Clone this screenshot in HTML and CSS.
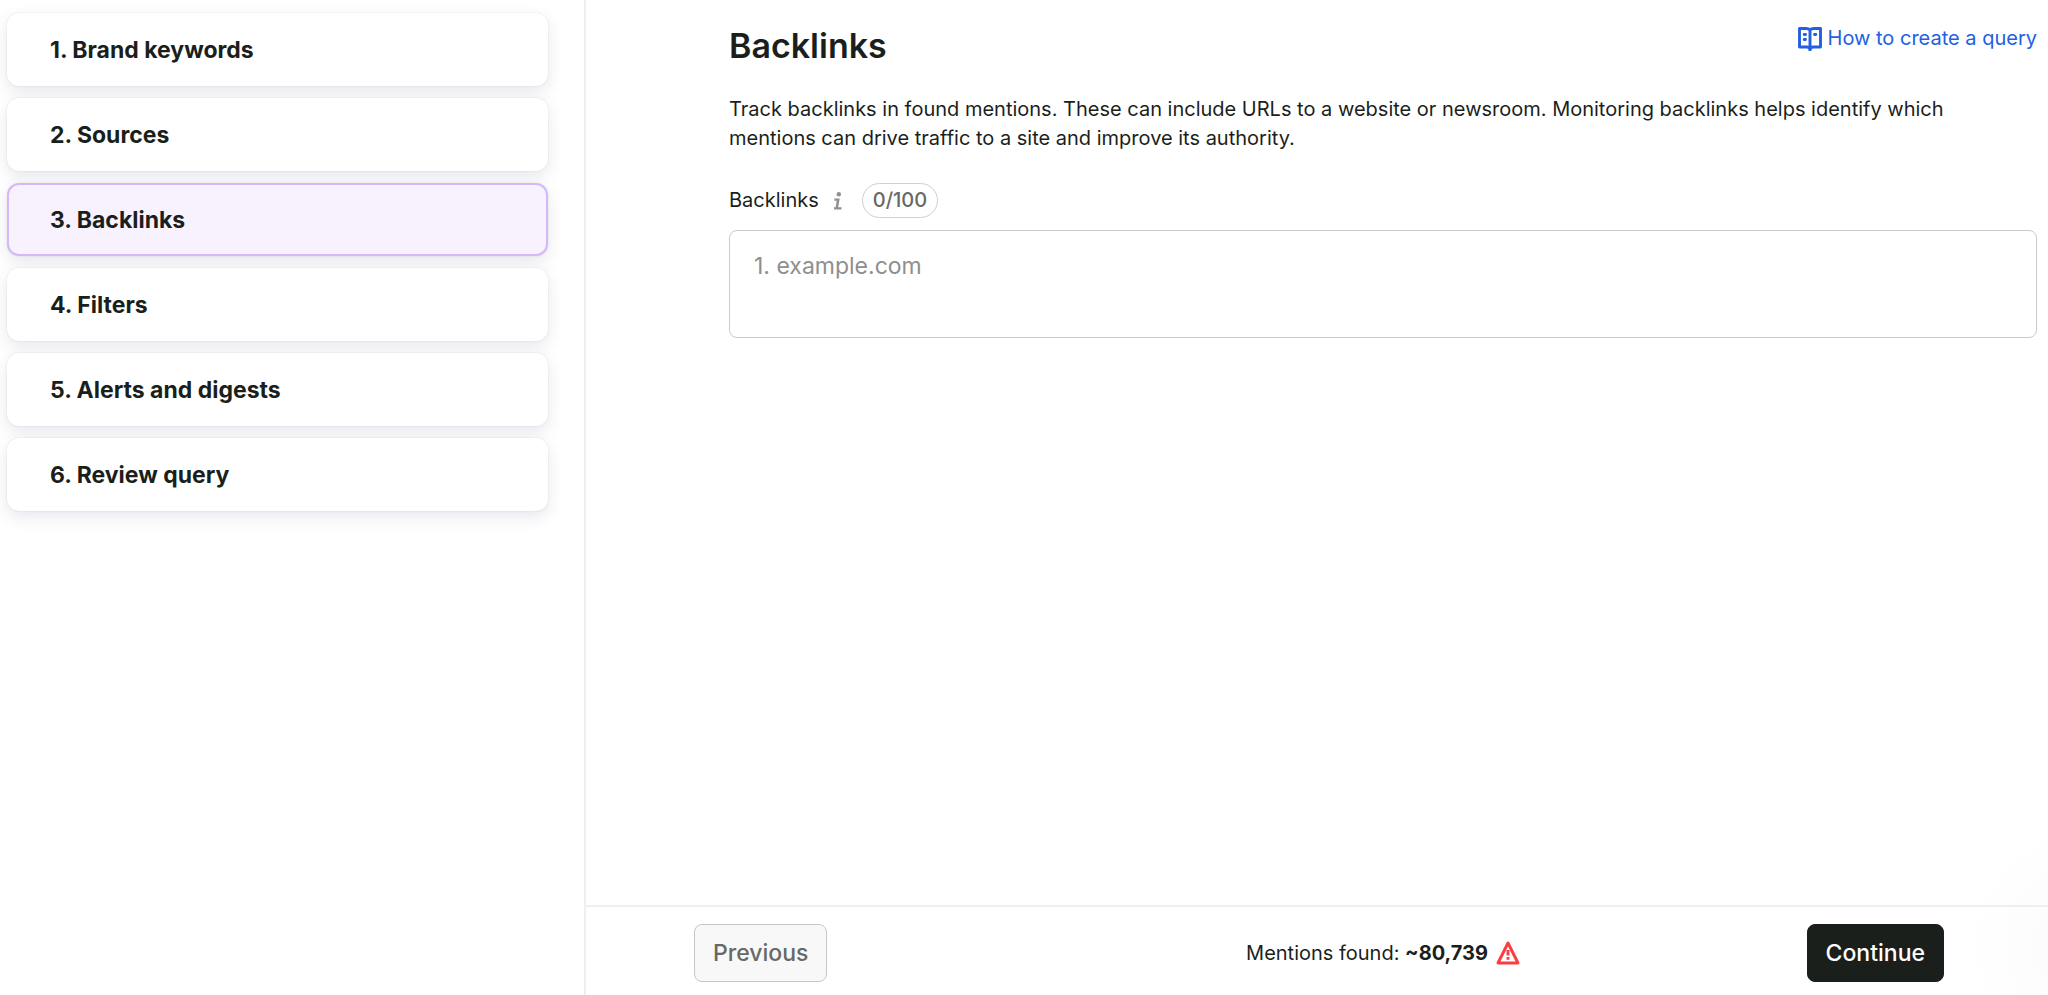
FILE: index.html
```html
<!DOCTYPE html>
<html lang="en">
<head>
    <meta charset="UTF-8">
    <meta name="viewport" content="width=device-width, initial-scale=1.0">
    <title>Backlinks</title>
    <link rel="stylesheet" href="styles.css">
</head>
<body>
    <nav class="steps">
        <button type="button" class="step">1. Brand keywords</button>
        <button type="button" class="step">2. Sources</button>
        <button type="button" class="step active">3. Backlinks</button>
        <button type="button" class="step">4. Filters</button>
        <button type="button" class="step">5. Alerts and digests</button>
        <button type="button" class="step">6. Review query</button>
    </nav>
    <div class="main">
        <main class="content">
            <div class="header">
                <h1>Backlinks</h1>
                <a href="#" class="help-link">
                    <svg class="icon" viewBox="0 0 24 24" fill="none" stroke="currentColor" stroke-width="2.9">
                        <path d="M12 3.2C11 1.800 9.500 1.500 8 1.500H1.500V20H9C10.500 20 12 20.500 12 23.500C12 20.500 13.500 20 15 20H22.500V1.500H16C14.500 1.500 13 1.800 12 3.200V20.500" stroke-linejoin="round"/>
                        <path d="M6.200 7.500H7.500M6.200 12.500H7.500M16.500 7.500H17.800" stroke-linecap="round"/>
                    </svg>
                    How to create a query
                </a>
            </div>
            <p class="description">Track backlinks in found mentions. These can include URLs to a website or newsroom. Monitoring backlinks helps identify which mentions can drive traffic to a site and improve its authority.</p>
            <div class="field-head">
                <label for="backlinks">Backlinks</label>
                <svg class="info" viewBox="0 0 10 18" fill="#8f918f">
                    <circle cx="5.800" cy="2.200" r="2.200"/>
                    <path d="M1.500 6.500h5.200L5.200 15.200H8.500v2.300H1V15.200h1.700L3.700 8.800H1.200z"/>
                </svg>
                <span class="counter">0/100</span>
            </div>
            <textarea id="backlinks" class="links-input" placeholder="1. example.com"></textarea>
        </main>
        <footer class="footer">
            <button type="button" class="btn btn-secondary">Previous</button>
            <div class="mentions">
                <span>Mentions found: <strong>~80,739</strong></span>
                <svg class="icon" viewBox="0 0 24 24" fill="none" stroke="#ff3b42" stroke-width="2.9">
                    <path d="M12 2L22 22H2Z" stroke-linejoin="round"/>
                    <path d="M12 9V14.500M12 16V18.800"/>
                </svg>
            </div>
            <button type="button" class="btn btn-primary">Continue</button>
        </footer>
    </div>
</body>
</html>
```
FILE: styles.css
```css
* {
    box-sizing: border-box;
}
body {
    display: flex;
    min-height: 100vh;
    margin: 0;
    background: #fff;
    color: #1b1f1c;
    font-family: Inter, "Liberation Sans", sans-serif;
    font-size: 20px;
    line-height: 29px;
}
button, textarea {
    font-family: inherit;
}
.steps {
    display: flex;
    flex-direction: column;
    gap: 12px;
    width: 586px;
    flex-shrink: 0;
    padding: 13px 36px 12px 7px;
    border-right: 2px solid #efefef;
}
.step {
    height: 73px;
    padding: 0 41px;
    border: 2px solid #fff;
    border-radius: 12px;
    background: #fff;
    box-shadow: 0 0 2px rgba(40, 41, 80, 0.12), 0 6px 16px rgba(60, 64, 110, 0.12);
    color: inherit;
    font-size: 23px;
    font-weight: 700;
    text-align: left;
    cursor: pointer;
}
.step.active {
    border-color: #d5b8fb;
    background: #f8f2ff;
}
.main {
    display: flex;
    flex-direction: column;
    flex: 1;
    background: radial-gradient(circle 120px at right -40px bottom 50px, #fafafa, #fff);
}
.content {
    flex: 1;
    padding: 24px 11px 24px 143px;
}
.header {
    display: flex;
    justify-content: space-between;
    align-items: flex-start;
}
h1 {
    margin: 0 0 28px;
    font-size: 34px;
    font-weight: 600;
    line-height: 43px;
}
.help-link {
    display: flex;
    align-items: center;
    gap: 6px;
    color: #2360e0;
    text-decoration: none;
}
.icon {
    width: 24px;
    height: 24px;
}
.description {
    margin: 0 0 30px;
    padding-right: 48px;
}
.field-head {
    display: flex;
    align-items: center;
    margin-bottom: 12px;
}
.info {
    width: 10px;
    height: 18px;
    margin: 0 19px 0 14px;
}
.counter {
    padding: 2px 10px;
    border: 1px solid #cfcfcf;
    border-radius: 18px;
    color: #666966;
    font-weight: 500;
}
.links-input {
    display: block;
    width: 100%;
    height: 108px;
    padding: 20px 24px;
    border: 1px solid #c9cac9;
    border-radius: 8px;
    color: inherit;
    font-size: 23px;
    line-height: 30px;
    resize: none;
}
.links-input::placeholder {
    color: #8d8f8d;
}
.footer {
    display: flex;
    align-items: center;
    padding: 17px 104px 13px 108px;
    border-top: 2px solid #efefef;
}
.mentions {
    display: flex;
    flex: 1;
    justify-content: center;
    align-items: center;
    gap: 8px;
    padding-left: 132px;
}
.btn {
    height: 58px;
    padding: 0 18px;
    border: 1px solid #c4c8c4;
    border-radius: 8px;
    font-size: 23px;
    font-weight: 500;
    cursor: pointer;
}
.btn-secondary {
    background: #f8f8f8;
    color: #666966;
}
.btn-primary {
    border-color: #1b1f1c;
    background: #1b1f1c;
    color: #fff;
}
```
